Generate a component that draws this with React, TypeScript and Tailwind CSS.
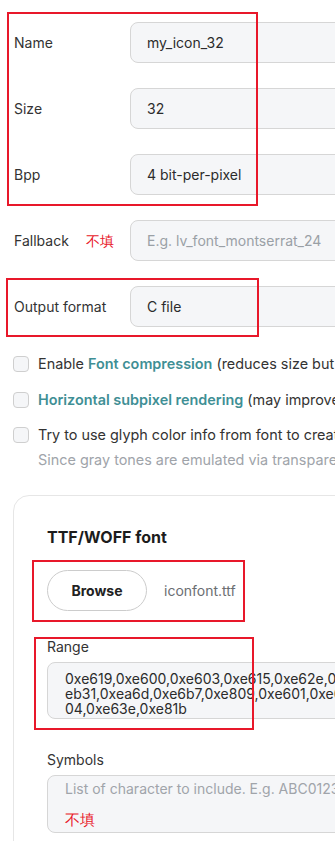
import type { ReactNode } from 'react';

const inputCls = 'flex items-center w-[260px] h-[41px] shrink-0 rounded-[8px] border border-[#d6d6d6] bg-[#f5f6f8] pl-[16px] text-[14px] text-[#2b2b2b] whitespace-nowrap overflow-hidden';

function Row({ label, children, extra }: { label: string; children: ReactNode; extra?: ReactNode }) {
    return (
        <div className='flex items-center h-[41px] mb-[25px] last:mb-0'>
            <div className='flex items-center w-[116px] shrink-0 text-[14px] text-[#333]'>
                <span>{label}</span>
                {extra}
            </div>
            {children}
        </div>
    );
}

function Check({ children }: { children: ReactNode }) {
    return (
        <div className='flex items-center h-[20px] whitespace-nowrap text-[14.4px] text-[#333]'>
            <span className='w-[16px] h-[16px] shrink-0 rounded-[4px] border border-[#cfcfcf] bg-[#f5f6f8]' />
            <span className='ml-[9px]'>{children}</span>
        </div>
    );
}

const teal = 'text-[#3f8f95] font-semibold';

export default function App() {
    return (
        <div className='relative w-[335px] h-[841px] overflow-hidden bg-white font-["Inter",sans-serif]'>
            <div className='pt-[22px] pl-[14px]'>
                <Row label='Name'>
                    <div className={inputCls}>my_icon_32</div>
                </Row>
                <Row label='Size'>
                    <div className={inputCls}>32</div>
                </Row>
                <Row label='Bpp'>
                    <div className={inputCls}>4 bit-per-pixel</div>
                </Row>
                <Row label='Fallback' extra={<span className='ml-[17px] text-[#e8182a]'>不填</span>}>
                    <div className={`${inputCls} text-[#9aa0a6]`}>E.g. lv_font_montserrat_24</div>
                </Row>
                <Row label='Output format'>
                    <div className={inputCls}>C file</div>
                </Row>
            </div>

            <div className='pl-[13px] mt-[27px] flex flex-col'>
                <Check>Enable <span className={teal}>Font compression</span> (reduces size but results slower rendering)</Check>
                <div className='mt-[16px]'>
                    <Check><span className={teal}>Horizontal subpixel rendering</span> (may improve font quality)</Check>
                </div>
                <div className='mt-[15px]'>
                    <Check>Try to use glyph color info from font to create grayscale icons</Check>
                    <div className='ml-[25px] mt-[4px] whitespace-nowrap text-[14.4px] text-[#a0a4aa]'>
                        Since gray tones are emulated via transparency, result may differ
                    </div>
                </div>
            </div>

            <div className='ml-[13px] mt-[24px] w-[400px] h-[400px] rounded-[16px] border border-[#e6e6e6] pt-[31px] pl-[33px]'>
                <div className='text-[16px] leading-[20px] font-bold text-[#1c1c1c]'>TTF/WOFF font</div>
                <div className='flex items-center mt-[23px]'>
                    <button className='w-[100px] h-[41px] rounded-full border border-[#cccccc] bg-white text-[14px] font-bold text-[#222]'>
                        Browse
                    </button>
                    <span className='ml-[17px] text-[14px] text-[#6b6e72]'>iconfont.ttf</span>
                </div>
                <div className='mt-[27px] text-[14px] leading-[18px] text-[#333]'>Range</div>
                <div className='mt-[6px] w-[330px] h-[57px] rounded-[8px] border border-[#d6d6d6] bg-[#f5f6f8] pt-[8px] pl-[17px] text-[14px] leading-[15px] text-[#2b2b2b] overflow-hidden whitespace-nowrap'>
                    <div>0xe619,0xe600,0xe603,0xe615,0xe62e,0xe6a2,0x</div>
                    <div>eb31,0xea6d,0xe6b7,0xe809,0xe601,0xe6f1,0xe5</div>
                    <div>04,0xe63e,0xe81b</div>
                </div>
                <div className='mt-[32px] text-[14px] leading-[18px] text-[#333]'>Symbols</div>
                <div className='mt-[6px] w-[330px] h-[58px] rounded-[8px] border border-[#d6d6d6] bg-[#f5f6f8] pt-[4px] pl-[17px] text-[14px] overflow-hidden whitespace-nowrap'>
                    <div className='leading-[17px] text-[#a0a4aa]'>List of character to include. E.g. ABC01234</div>
                    <div className='mt-[14px] leading-[17px] text-[15px] text-[#e8182a]'>不填</div>
                </div>
            </div>

            <div className='absolute left-[7px] top-[12px] w-[251px] h-[194px] border-2 border-[#e8182a]' />
            <div className='absolute left-[6px] top-[278px] w-[253px] h-[59px] border-2 border-[#e8182a]' />
            <div className='absolute left-[32px] top-[560px] w-[213px] h-[62px] border-2 border-[#e8182a]' />
            <div className='absolute left-[34px] top-[637px] w-[220px] h-[93px] border-2 border-[#e8182a]' />
        </div>
    );
}
